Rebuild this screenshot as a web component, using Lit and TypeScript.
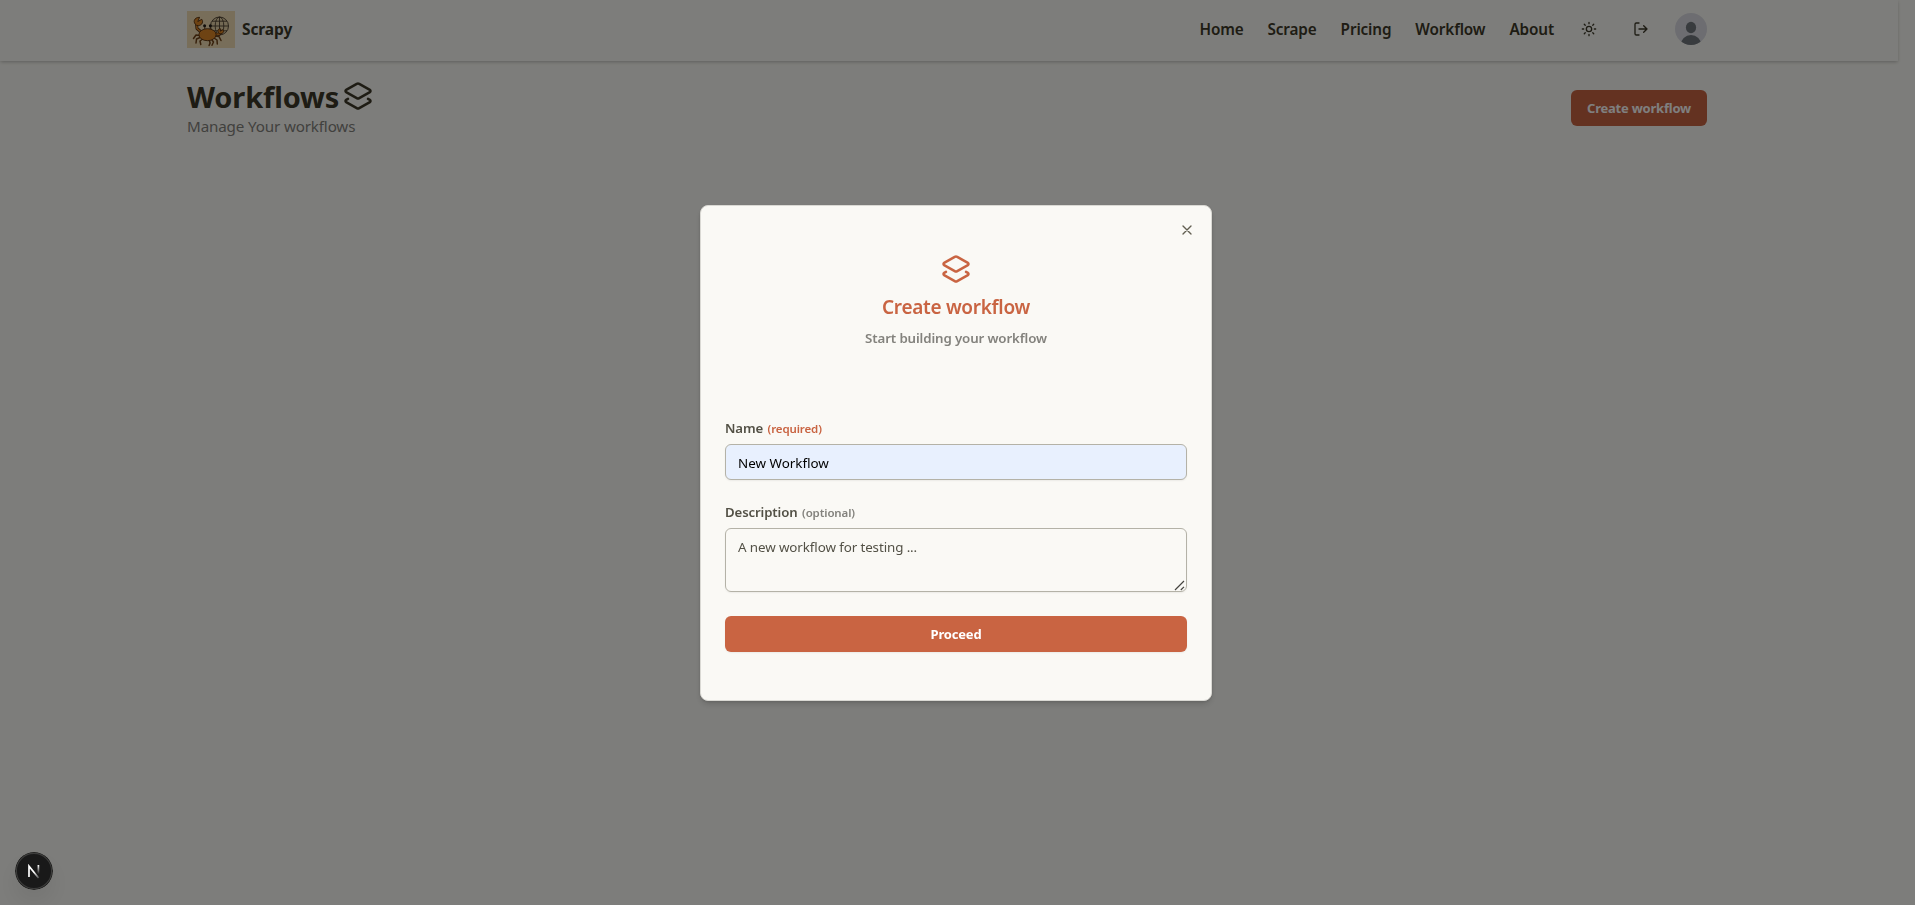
import { LitElement, html, css, svg } from "lit";
import { customElement, property } from "lit/decorators.js";

const layers = svg`<path d="M13 13.74a2 2 0 0 1-2 0L2.5 8.87a1 1 0 0 1 0-1.74L11 2.26a2 2 0 0 1 2 0l8.5 4.87a1 1 0 0 1 0 1.74z"/><path d="m20 14.285 1.5.845a1 1 0 0 1 0 1.74L13 21.74a2 2 0 0 1-2 0l-8.5-4.87a1 1 0 0 1 0-1.74l1.5-.845"/>`;
const sun = svg`<circle cx="12" cy="12" r="4"/><path d="M12 2v2M12 20v2M4.93 4.93l1.41 1.41M17.66 17.66l1.41 1.41M2 12h2M20 12h2M6.34 17.66l-1.41 1.41M19.07 4.93l-1.41 1.41"/>`;
const logout = svg`<path d="M9 21H5a2 2 0 0 1-2-2V5a2 2 0 0 1 2-2h4"/><path d="m16 17 5-5-5-5M21 12H9"/>`;
const cross = svg`<path d="M18 6 6 18M6 6l12 12"/>`;
const glyphs: Record<string, unknown> = { layers, sun, logout, cross };

@customElement("line-icon")
class LineIcon extends LitElement {
  @property() name = "sun";
  @property({ type: Number }) size = 16;
  static styles = css`
    :host { display: inline-flex; flex: none; }
    svg { display: block; fill: none; stroke: currentColor; stroke-width: 2; stroke-linecap: round; stroke-linejoin: round; }
  `;
  render() {
    return html`<svg width=${this.size} height=${this.size} viewBox="0 0 24 24">${glyphs[this.name]}</svg>`;
  }
}

@customElement("site-header")
class SiteHeader extends LitElement {
  static styles = css`
    :host { display: block; }
    .bar { box-sizing: border-box; height: 61px; width: 1898px; padding: 0 191px 3px 187px; display: flex; align-items: center; justify-content: space-between; background: #fbfbf6; box-shadow: 0 1px 3px rgba(0,0,0,.12), 0 2px 4px -1px rgba(0,0,0,.14); }
    .brand { display: flex; align-items: center; gap: 7px; font-size: 15.5px; font-weight: 700; letter-spacing: -.1px; }
    .logo { display: block; }
    .right { display: flex; align-items: center; }
    nav { display: flex; gap: 24px; font-size: 15.3px; font-weight: 600; letter-spacing: -.14px; margin-right: 27px; }
    .tools { display: flex; align-items: center; gap: 36px; }
    .avatar { display: block; margin-left: -10px; }
  `;
  render() {
    return html`<header class="bar">
      <div class="brand">
        <svg class="logo" width="48" height="37" viewBox="0 0 48 37">
          <rect width="48" height="37" fill="#f0dcb4"/>
          <g fill="none" stroke="#4d4030" stroke-width=".9">
            <circle cx="32.5" cy="15" r="9" fill="#e6d3a8"/>
            <ellipse cx="32.5" cy="15" rx="4.3" ry="9"/>
            <path d="M32.5 6v18M23.5 15h18M25 10.2h15M25 19.8h15"/>
          </g>
          <g fill="none" stroke="#704318" stroke-width="1.5" stroke-linecap="round" stroke-linejoin="round">
            <path d="M13 24.5 9 24l-2.5 3.5M13 26.5 9.5 28 9 32M15 28.5l-2 1.5.8 3.5M28 25l4 .5 2 4M27 27l3 2 .3 4M25 29l1.5 2-1.5 3.3M22.5 30l.6 2-1 2.5"/>
          </g>
          <g fill="none" stroke-linecap="round" stroke-linejoin="round">
            <path d="M13.5 20.5 10 17.5l-.4-4M28.5 23l3.5.3 1.5-2" stroke="#533012" stroke-width="3"/>
            <path d="M13.5 20.5 10 17.5l-.4-4M28.5 23l3.5.3 1.5-2" stroke="#dc8325" stroke-width="1.5"/>
          </g>
          <g fill="#dd8626" stroke="#533012" stroke-width=".9" stroke-linejoin="round">
            <path d="M9.8 14.5C5.2 11.5 7 6.2 12.6 6.3l-1.8 4.2 4-2.2c2.2 3.4-.6 7-5 6.2Z"/>
            <path d="M32.3 22.5c-3-2.8-.6-5.3 1.6-4.5l-.7 2.2 2.8-1.6c1.8 2.6-.8 4.8-3.7 3.9Z"/>
            <path d="M17.8 19v-3M23.2 19v-3"/>
            <ellipse cx="20.5" cy="23.7" rx="8.6" ry="6"/>
          </g>
          <circle cx="17.6" cy="14.7" r="1.5" fill="#211a16"/><circle cx="23.4" cy="14.7" r="1.5" fill="#211a16"/>
        </svg>
        <span>Scrapy</span>
      </div>
      <div class="right">
        <nav>${["Home", "Scrape", "Pricing", "Workflow", "About"].map((t) => html`<span>${t}</span>`)}</nav>
        <div class="tools">
          <line-icon name="sun"></line-icon>
          <line-icon name="logout"></line-icon>
          <svg class="avatar" width="32" height="32" viewBox="0 0 32 32">
            <defs><clipPath id="disc"><circle cx="16" cy="16" r="16"/></clipPath></defs>
            <g clip-path="url(#disc)"><rect width="32" height="32" fill="#dadbe2"/><ellipse cx="16" cy="14.5" rx="5.1" ry="5.8" fill="#70767c"/><ellipse cx="16" cy="32" rx="10.3" ry="10" fill="#70767c"/></g>
          </svg>
        </div>
      </div>
    </header>`;
  }
}

@customElement("workflow-dialog")
class WorkflowDialog extends LitElement {
  static styles = css`
    :host { display: block; }
    .dialog { position: relative; box-sizing: border-box; width: 512px; height: 496px; padding: 48px 24px 0; background: #faf9f5; border: 1px solid #dad9d4; border-radius: 8px; box-shadow: 0 1px 3px rgba(0,0,0,.1), 0 4px 6px -1px rgba(0,0,0,.15); }
    .close { position: absolute; top: 16px; right: 16px; display: flex; opacity: .8; }
    .head { display: flex; flex-direction: column; align-items: center; color: #c96442; }
    .title { margin-top: 9px; font-size: 19px; line-height: 28px; font-weight: 600; letter-spacing: -.3px; }
    .sub { margin-top: 7px; font-size: 13.3px; line-height: 20px; font-weight: 600; letter-spacing: -.13px; color: #83827d; }
    form { display: flex; flex-direction: column; margin-top: 70px; }
    label { display: flex; align-items: baseline; gap: 4.5px; height: 20px; margin-bottom: 6px; font-size: 13.2px; line-height: 20px; font-weight: 600; letter-spacing: -.12px; color: #535146; }
    .hint { font-size: 11.5px; color: #83827d; }
    .required { color: #c96442; }
    input, textarea { display: block; box-sizing: border-box; width: 100%; margin: 0; font-family: inherit; font-size: 13.4px; border: 1px solid #b4b2a7; border-radius: 6px; box-shadow: 0 1px 2px rgba(0,0,0,.06); outline: none; }
    input { height: 36px; padding: 5px 12px 3px; background: #e8f0fe; color: #000; margin-bottom: 22px; }
    .area { position: relative; margin-bottom: 24px; }
    textarea { height: 64px; padding: 8px 12px; line-height: 20px; letter-spacing: -.11px; background: transparent; color: #535146; resize: none; }
    .grip { position: absolute; right: 2px; bottom: 1px; fill: none; stroke: #45443f; stroke-width: 1.2; }
    button { height: 36px; border: 0; border-radius: 6px; background: #c96442; color: #fff; font: 700 13px "Noto Sans", sans-serif; letter-spacing: -.17px; box-shadow: 0 1px 2px rgba(0,0,0,.06); }
  `;
  render() {
    return html`<section class="dialog" role="dialog">
      <span class="close"><line-icon name="cross"></line-icon></span>
      <div class="head">
        <line-icon name="layers" size="30"></line-icon>
        <div class="title">Create workflow</div>
        <div class="sub">Start building your workflow</div>
      </div>
      <form>
        <label>Name <span class="hint required">(required)</span></label>
        <input .value=${"New Workflow"} />
        <label>Description <span class="hint">(optional)</span></label>
        <div class="area">
          <textarea .value=${"A new workflow for testing ..."}></textarea>
          <svg class="grip" width="11" height="11" viewBox="0 0 11 11"><path d="M1 10 10 1M6.8 10 10 6.8"/></svg>
        </div>
        <button type="button">Proceed</button>
      </form>
    </section>`;
  }
}

@customElement("app-root")
class AppRoot extends LitElement {
  static styles = css`
    :host { display: block; height: 905px; overflow: hidden; background: #fbfbf6; color: #3d3929; font-family: "Noto Sans", "Open Sans", sans-serif; }
    main { display: flex; justify-content: space-between; align-items: flex-start; padding: 18px 208px 0 187px; }
    h1 { display: flex; align-items: center; gap: 4px; margin: 0; height: 36px; font-size: 29px; line-height: 36px; font-weight: 700; letter-spacing: -.12px; }
    h1 line-icon { margin-top: -2px; }
    p { margin: -1px 0 0; font-size: 15.2px; line-height: 24px; letter-spacing: -.15px; color: #83827d; }
    .create { height: 36px; margin-top: 11px; padding: 0; width: 136px; border: 0; border-radius: 6px; background: #c96442; color: #fff; font: 700 13px "Noto Sans", sans-serif; letter-spacing: -.22px; }
    .overlay { position: fixed; inset: 0; display: flex; align-items: center; justify-content: center; padding: 1px 3px 0 0; background: rgba(0,0,0,.5); }
    .dev { position: fixed; left: 15px; top: 852px; display: block; border-radius: 50%; box-shadow: 0 12px 24px rgba(0,0,0,.08); }
  `;
  render() {
    return html`
      <site-header></site-header>
      <main>
        <div>
          <h1>Workflows<line-icon name="layers" size="30"></line-icon></h1>
          <p>Manage Your workflows</p>
        </div>
        <button class="create">Create workflow</button>
      </main>
      <div class="overlay"><workflow-dialog></workflow-dialog></div>
      <svg class="dev" width="38" height="38" viewBox="0 0 38 38">
        <defs>
          <linearGradient id="diag" x1="19" y1="20" x2="24" y2="26" gradientUnits="userSpaceOnUse"><stop stop-color="#fff"/><stop offset="1" stop-color="#fff" stop-opacity=".2"/></linearGradient>
          <linearGradient id="stem" x1="0" y1="13" x2="0" y2="22" gradientUnits="userSpaceOnUse"><stop stop-color="#fff"/><stop offset="1" stop-color="#fff" stop-opacity="0"/></linearGradient>
        </defs>
        <circle cx="19" cy="19" r="19" fill="#1c1c1b"/>
        <circle cx="19" cy="19" r="17.6" fill="#191919" stroke="#3d3d3c" stroke-width="1.1"/>
        <path d="M14 25V14.2L23.6 26" fill="none" stroke="url(#diag)" stroke-width="1.7"/>
        <rect x="22.55" y="13" width="1.7" height="9" fill="url(#stem)"/>
      </svg>
    `;
  }
}
